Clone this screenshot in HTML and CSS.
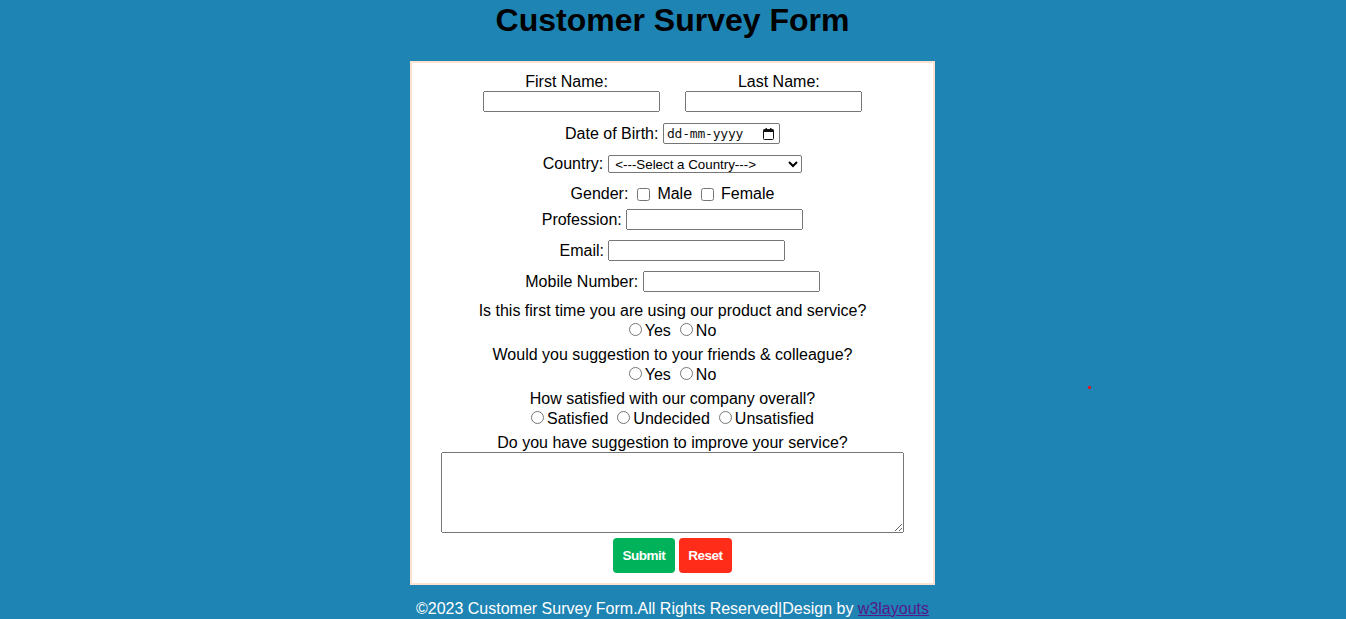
FILE: index.html
```html
<!DOCTYPE html>
<html lang="en">
<head>
<meta charset="utf-8">
<title>Customer Survey Form</title>
<link rel="stylesheet" href="styles.css">
</head>
<body>
<h1 class="title">Customer Survey Form</h1>
<main class="card">
  <form class="survey">
    <div class="names">
      <div class="name-labels">
        <label for="fname">First Name:</label>
        <label for="lname">Last Name:</label>
      </div>
      <div class="name-inputs">
        <input class="field" id="fname" type="text">
        <input class="field" id="lname" type="text">
      </div>
    </div>

    <div class="row row-dob">
      <label for="dob">Date of Birth:</label>
      <span class="date-field">
        <input id="dob" class="date-input" type="text" placeholder="dd-mm-yyyy">
        <svg class="cal-icon" width="11" height="12" viewBox="0 0 11 12" aria-hidden="true">
          <rect x="0.5" y="1.5" width="10" height="10" rx="1" fill="none" stroke="#111" stroke-width="1"/>
          <rect x="0.5" y="1.5" width="10" height="2.5" fill="#111"/>
          <rect x="2.5" y="0" width="1.4" height="2.5" fill="#111"/>
          <rect x="7.1" y="0" width="1.4" height="2.5" fill="#111"/>
        </svg>
      </span>
    </div>

    <div class="row row-country">
      <label for="country">Country:</label>
      <select id="country" class="country">
        <option>&lt;---Select a Country---&gt;</option>
        <option>India</option>
        <option>USA</option>
      </select>
    </div>

    <div class="row row-gender">
      <span>Gender:</span>
      <input class="check" type="checkbox" id="male">
      <label for="male">Male</label>
      <input class="check" type="checkbox" id="female">
      <label for="female">Female</label>
    </div>

    <div class="row row-input row-profession">
      <label for="prof">Profession:</label>
      <input class="field" id="prof" type="text">
    </div>

    <div class="row row-input">
      <label for="email">Email:</label>
      <input class="field" id="email" type="email">
    </div>

    <div class="row row-input">
      <label for="mobile">Mobile Number:</label>
      <input class="field" id="mobile" type="tel">
    </div>

    <div class="question q-first">Is this first time you are using our product and service?</div>
    <div class="opts">
      <label class="opt"><input type="radio" name="q1">Yes</label>
      <label class="opt"><input type="radio" name="q1">No</label>
    </div>

    <div class="question">Would you suggestion to your friends &amp; colleague?</div>
    <div class="opts">
      <label class="opt"><input type="radio" name="q2">Yes</label>
      <label class="opt"><input type="radio" name="q2">No</label>
    </div>

    <div class="question">How satisfied with our company overall?</div>
    <div class="opts">
      <label class="opt"><input type="radio" name="q3">Satisfied</label>
      <label class="opt"><input type="radio" name="q3">Undecided</label>
      <label class="opt"><input type="radio" name="q3">Unsatisfied</label>
    </div>

    <div class="question">Do you have suggestion to improve your service?</div>
    <div class="area-row">
      <textarea class="area"></textarea>
    </div>

    <div class="actions">
      <button type="submit" class="btn btn-submit">Submit</button>
      <button type="reset" class="btn btn-reset">Reset</button>
    </div>
  </form>
</main>
<footer class="footer">©2023 Customer Survey Form.All Rights Reserved|Design by <a class="credit" href="#">w3layouts</a></footer>
<span class="dot"></span>
</body>
</html>
```

FILE: styles.css
```css
html, body {
  margin: 0;
  padding: 0;
}

body {
  background: #1e84b4;
  font-family: "Liberation Sans", Arial, sans-serif;
  font-size: 16px;
  color: #000;
  position: relative;
  min-height: 619px;
  padding-right: 1px;
}

.title {
  margin: 0;
  padding-top: 2px;
  font-size: 32px;
  font-weight: bold;
  text-align: center;
  line-height: 37px;
}

.card {
  box-sizing: border-box;
  width: 525px;
  margin: 22px auto 0;
  background: #fff;
  border: 2px solid #fde3cf;
  padding: 10px 0 10px;
}

.survey {
  display: flex;
  flex-direction: column;
  align-items: center;
}

.field {
  box-sizing: border-box;
  width: 177px;
  height: 21px;
  margin: 0;
  font-family: "Liberation Sans", Arial, sans-serif;
  font-size: 13.33px;
}

.names {
  display: flex;
  flex-direction: column;
  align-items: center;
}

.name-labels {
  display: flex;
  justify-content: center;
  gap: 130px;
  height: 18px;
  line-height: 18px;
}

.name-inputs {
  display: flex;
  justify-content: center;
  gap: 25px;
}

.row {
  display: flex;
  justify-content: center;
  align-items: center;
  line-height: 18px;
}

.row-dob {
  margin-top: 11px;
  height: 21px;
  gap: 4.5px;
}

.date-field {
  box-sizing: border-box;
  width: 117px;
  height: 21px;
  display: inline-flex;
  align-items: center;
  border: 1px solid #767676;
  border-radius: 2px;
  padding: 0 5px 0 3px;
  background: #fff;
}

.date-input {
  border: none;
  outline: none;
  padding: 0;
  margin: 0;
  width: 82px;
  height: 17px;
  font-family: "DejaVu Sans Mono", "Liberation Mono", monospace;
  font-size: 13px;
  letter-spacing: -0.2px;
  background: transparent;
}

.date-input::placeholder {
  color: #111;
  opacity: 1;
}

.cal-icon {
  margin-left: auto;
  flex: none;
}

.row-country {
  margin-top: 11px;
  height: 18px;
  gap: 5px;
}

.country {
  box-sizing: border-box;
  width: 194px;
  height: 18px;
  margin: 0;
  padding: 0 0 0 2px;
  font-family: "Liberation Sans", Arial, sans-serif;
  font-size: 13.33px;
  border: 1px solid #767676;
  border-radius: 2px;
  background: #fff;
  color: #000;
}

.row-gender {
  margin-top: 12px;
  height: 18px;
}

.check {
  width: 13px;
  height: 13px;
  margin: 0 7.5px 0 8.5px;
}

.row-input {
  margin-top: 10px;
  height: 21px;
  gap: 4.5px;
}

.row-profession {
  margin-top: 6px;
}

.question {
  height: 18px;
  line-height: 18px;
  margin-top: 6px;
  text-align: center;
}

.q-first {
  margin-top: 10px;
}

.opts {
  display: flex;
  justify-content: center;
  align-items: flex-end;
  gap: 9px;
  height: 20px;
}

.opt {
  display: inline-flex;
  align-items: flex-end;
  gap: 3px;
  line-height: 18px;
  height: 19px;
}

.opt input {
  width: 13px;
  height: 13px;
  margin: 0 0 4px 0;
}

.area-row {
  display: flex;
  justify-content: center;
}

.area {
  box-sizing: border-box;
  width: 463px;
  height: 81px;
  margin: 0;
  display: block;
}

.actions {
  display: flex;
  justify-content: center;
  gap: 4px;
  margin-top: 5px;
}

.btn {
  border: none;
  border-radius: 4px;
  color: #fff;
  font-family: "Liberation Sans", Arial, sans-serif;
  font-size: 13.5px;
  font-weight: bold;
  letter-spacing: -0.5px;
  height: 35px;
  padding: 0 9.5px;
  cursor: pointer;
}

.btn-submit {
  background: #00b259;
}

.btn-reset {
  background: #ff2c19;
}

.footer {
  margin-top: 15px;
  text-align: center;
  color: #fff;
  line-height: 18px;
}

.credit {
  color: #551a8b;
}

.dot {
  position: absolute;
  left: 1088px;
  top: 386px;
  width: 3px;
  height: 3px;
  background: #e8131d;
  border-radius: 1px;
}
```
